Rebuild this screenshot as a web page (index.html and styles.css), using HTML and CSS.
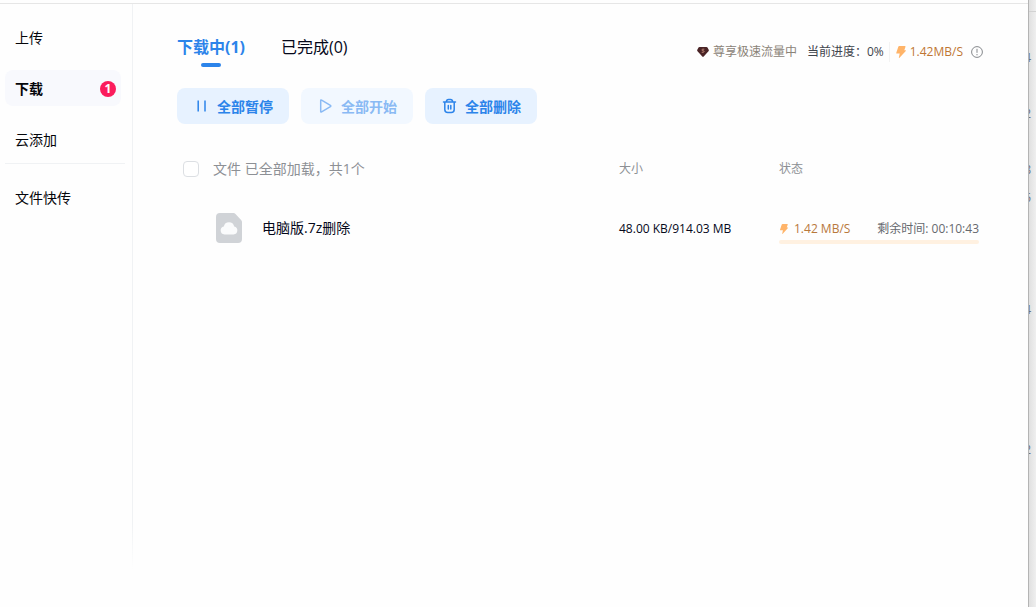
FILE: index.html
```html
<!DOCTYPE html>
<html lang="zh-CN">
<head>
    <meta charset="UTF-8">
    <meta name="viewport" content="width=device-width, initial-scale=1.0">
    <title>下载</title>
    <link rel="stylesheet" href="styles.css">
</head>
<body>
    <div class="window">
        <nav class="sidebar">
            <a class="navItem" href="#upload">上传</a>
            <a class="navItem active" href="#download">下载 <span class="badge">1</span></a>
            <a class="navItem" href="#cloud">云添加</a>
            <hr class="divider">
            <a class="navItem" href="#transfer">文件快传</a>
        </nav>

        <main class="content">
            <header class="topBar">
                <div class="tabs">
                    <button class="tab selected">下载中(1)</button>
                    <button class="tab">已完成(0)</button>
                </div>
                <div class="speedInfo">
                    <svg class="gem" width="12" height="12" viewBox="0 0 12 12">
                        <path d="M2.500 1h7q.6 0 1 .6l1.200 2.200q.4.700-.2 1.400L6.700 10.600q-.7.700-1.400 0L.5 5.200Q-.1 4.500.3 3.800l1.200-2.200q.4-.6 1-.6z" fill="#4a2426"/>
                        <path d="M7.300 3.200H5.700c-1 0-1 1.500 0 1.500h.6c1 0 1 1.600 0 1.600H4.700" fill="none" stroke="#d59a86" stroke-width=".8"/>
                    </svg>
                    <span class="vip">尊享极速流量中</span>
                    <span class="progressText">当前进度：0%</span>
                    <span class="fast">
                        <svg width="10" height="12" viewBox="0 0 10 12">
                            <path d="M3.200 0H9q.7 0 .5.700L8.300 4.300h1.200q.7 0 .3.600L3.500 11.700q-.8.700-.6-.3L3.700 7.600H.9Q0 7.600.3 6.700L2.300.7Q2.600 0 3.200 0z" fill="#ffb469"/>
                        </svg>
                        1.42MB/S
                    </span>
                    <svg class="tip" width="12" height="12" viewBox="0 0 12 12" fill="none" stroke="#85888c">
                        <circle cx="6" cy="6" r="5.400"/>
                        <path d="M6 2.800v4M6 8v1.300"/>
                    </svg>
                </div>
            </header>

            <div class="actions">
                <button class="action">
                    <svg width="16" height="16" viewBox="0 0 16 16" fill="none" stroke="currentColor" stroke-width="1.500">
                        <path d="M5.200 2.500v11M12 2.500v11"/>
                    </svg>
                    全部暂停
                </button>
                <button class="action" disabled>
                    <svg width="16" height="16" viewBox="0 0 16 16" fill="none" stroke="currentColor" stroke-width="1.500" stroke-linejoin="round">
                        <path d="M3.700 2.600v10.800q0 1 .9.500l8.800-5.200q.8-.7 0-1.300L4.600 2.100q-.9-.5-.9.500z"/>
                    </svg>
                    全部开始
                </button>
                <button class="action">
                    <svg width="16" height="16" viewBox="0 0 16 16" fill="none" stroke="currentColor" stroke-width="1.500" stroke-linecap="round">
                        <path d="M2.500 4h12M5.300 3.800Q5.500 1.500 7.500 1.500h2q2 0 2.200 2.300M3.800 4.200v7.300q0 3 3 3h3.400q3 0 3-3V4.200M7.300 7.500v3.500M9.800 7.500v3.500"/>
                    </svg>
                    全部删除
                </button>
            </div>

            <table class="fileTable">
                <thead>
                    <tr>
                        <th class="checkCol"><input class="check" type="checkbox" aria-label="全选"></th>
                        <th class="nameHead">文件 已全部加载，共1个</th>
                        <th class="sizeCol">大小</th>
                        <th class="stateCol">状态</th>
                    </tr>
                </thead>
                <tbody>
                    <tr>
                        <td></td>
                        <td>
                            <div class="file">
                                <svg width="26" height="30" viewBox="0 0 26 30">
                                    <path d="M4 0h13.500q1.200 0 2 .9l5.600 6q.9.900.9 2.100v17q0 4-4 4H4q-4 0-4-4V4q0-4 4-4z" fill="#d0d3d7"/>
                                    <path d="M8.500 21.500a4 4 0 0 1-.7-7.900 5.300 5.300 0 0 1 10.400 0 4 4 0 0 1-.7 7.900z" fill="#fafbfc"/>
                                </svg>
                                <span>电脑版.7z删除</span>
                            </div>
                        </td>
                        <td class="size">48.00 KB/914.03 MB</td>
                        <td class="state">
                            <div class="stateText">
                                <span class="rate">
                                    <svg width="10" height="10" viewBox="0 0 10 12">
                                        <path d="M3.200 0H9q.7 0 .5.700L8.300 4.300h1.200q.7 0 .3.600L3.500 11.700q-.8.700-.6-.3L3.700 7.600H.9Q0 7.600.3 6.700L2.300.7Q2.600 0 3.200 0z" fill="#ffb469"/>
                                    </svg>
                                    1.42 MB/S
                                </span>
                                <span>剩余时间: 00:10:43</span>
                            </div>
                            <div class="bar"></div>
                        </td>
                    </tr>
                </tbody>
            </table>
        </main>
    </div>

    <!-- edge of the window behind -->
    <aside class="behind">
        <ul class="counts">
            <li>4</li>
            <li></li>
            <li>2</li>
            <li></li>
            <li>8</li>
            <li>5</li>
            <li></li>
            <li></li>
            <li></li>
            <li>4</li>
            <li></li>
            <li></li>
            <li></li>
            <li></li>
            <li>2</li>
        </ul>
    </aside>
</body>
</html>
```

FILE: styles.css
```css
* {
    box-sizing: border-box;
}

body {
    margin: 0;
    min-height: 100vh;
    display: flex;
    background-color: #fefefe;
    color: #05081a;
    font-family: "Open Sans", "Noto Sans CJK SC", sans-serif;
    font-size: 14px;
    line-height: 20px;
}

button {
    border: none;
    padding: 0;
    background: none;
    font-family: inherit;
    cursor: pointer;
}

svg {
    flex: none;
}

.window {
    flex: 1;
    display: flex;
    margin-top: 3px;
    border-top: 1px solid #e6e6e6;
}

.sidebar {
    width: 133px;
    flex: none;
    display: flex;
    flex-direction: column;
    gap: 15px;
    padding: 15px 12px 0 5px;
    margin-bottom: 38px;
    background: linear-gradient(to bottom, #f0f2f4 92%, #fefefe) right / 1px 100% no-repeat;
}

.navItem {
    display: flex;
    justify-content: space-between;
    align-items: center;
    height: 36px;
    padding: 1px 5px 0 10px;
    border-radius: 8px;
    color: #05060a;
    text-decoration: none;
}

.navItem.active {
    background-color: #f8f9fd;
    font-weight: bold;
}

.badge {
    width: 16px;
    height: 16px;
    border-radius: 50%;
    background-color: #fb1c5c;
    color: #fff;
    font-size: 12px;
    line-height: 16px;
    text-align: center;
}

.divider {
    width: 120px;
    margin: -9px 0 0;
    border: none;
    border-top: 1px solid #f0f2f4;
}

.content {
    flex: 1;
    min-width: 0;
    padding: 32px 45px 0 44px;
}

.topBar {
    display: flex;
    justify-content: space-between;
    align-items: flex-start;
}

.tabs {
    display: flex;
    gap: 36px;
}

.tab {
    display: flex;
    flex-direction: column;
    align-items: center;
    gap: 4px;
    color: #05081a;
    font-size: 16px;
    line-height: 23px;
}

.tab.selected {
    color: #2c84ea;
    font-weight: bold;
}

.tab.selected::after {
    content: '';
    width: 20px;
    height: 4px;
    border-radius: 2px;
    background-color: #2c84ea;
}

.speedInfo {
    display: flex;
    align-items: center;
    padding-top: 6px;
    color: #3e444c;
    font-size: 12px;
}

.gem {
    margin-right: 4px;
}

.vip {
    color: #8b8378;
}

.progressText {
    padding: 0 5px 0 10px;
}

.fast {
    display: flex;
    align-items: center;
    gap: 4px;
    padding-left: 6px;
    border-left: 1px solid #f3f3f3;
    color: #bf7733;
}

.tip {
    margin-left: 8px;
}

.actions {
    display: flex;
    gap: 12px;
    margin-top: 21px;
}

.action {
    display: flex;
    justify-content: center;
    align-items: center;
    gap: 8px;
    width: 112px;
    height: 36px;
    border-radius: 8px;
    background-color: #e7f2ff;
    color: #2c84ea;
    font-size: 14px;
    font-weight: bold;
}

.action:disabled {
    background-color: #f2f8ff;
    color: #8abaf4;
    cursor: default;
}

.fileTable {
    width: 100%;
    margin-top: 25px;
    border-collapse: collapse;
    table-layout: fixed;
}

th, td {
    padding: 0;
    text-align: left;
    font-weight: normal;
}

th {
    height: 40px;
    color: #8d9095;
    font-size: 12px;
}

.checkCol {
    width: 36px;
    padding-left: 6px;
}

.nameHead {
    font-size: 14px;
}

.sizeCol {
    width: 160px;
}

.stateCol {
    width: 204px;
}

.check {
    appearance: none;
    display: block;
    width: 16px;
    height: 16px;
    margin: 0;
    border: 1px solid #dcdfe3;
    border-radius: 4px;
    background-color: #fff;
}

td {
    height: 78px;
}

.file {
    display: flex;
    align-items: center;
    gap: 20px;
    padding-left: 3px;
}

.size, .state {
    font-size: 12px;
}

.size {
    padding-top: 2px;
}

.state {
    padding: 6px 4px 0 0;
}

.stateText {
    display: flex;
    justify-content: space-between;
    color: #66696e;
}

.rate {
    display: flex;
    align-items: center;
    gap: 5px;
    color: #b8783c;
}

.bar {
    height: 4px;
    margin-top: 1px;
    border-radius: 2px;
    background-color: #fff1e1;
}

.behind {
    width: 8px;
    flex: none;
    overflow: hidden;
    border-left: 1px solid #b4b4b4;
    background: linear-gradient(to right, #e0e0e0, #efefef);
}

.counts {
    display: flex;
    flex-direction: column;
    margin: 11px 0 0;
    padding: 32px 5px 0 0;
    border-top: 1px solid #d2d2d2;
    list-style: none;
    color: #6b7480;
    font-size: 12px;
    line-height: 28px;
}

.counts li {
    display: flex;
    justify-content: flex-end;
    height: 28px;
}
```
